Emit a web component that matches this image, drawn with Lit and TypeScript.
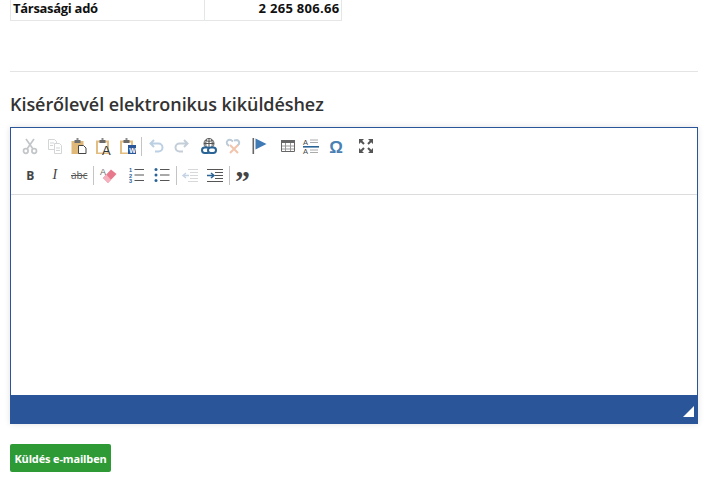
import { LitElement, html, css, svg } from "lit";
import { customElement } from "lit/decorators.js";

const clip = () => svg`<path d="M0 2.5h13v13.5H0z" fill="#e3be82"/><path d="M2 4.5h9v10H2z" fill="#fff"/><path d="M3.5 2h6v3h-6z" fill="#6b6b6b"/><path d="M5.5 0h2v2h-2z" fill="#8a8a8a"/>`;

const icons: Record<string, unknown> = {
  cut: svg`<g fill="none" stroke="#c3c6c9" stroke-width="1.7"><circle cx="3.8" cy="13" r="2.3"/><circle cx="12.2" cy="13" r="2.3"/><path d="M5 11 12 1M11 11 4 1"/></g>`,
  copy: svg`<g fill="#fff" stroke="#d3d5d7"><path d="M1.5 1.5h6l2 2v8h-8z"/><path d="M7.5 5.5h5l2 2v8h-7z"/><path d="M3 5h4M3 7.5h3M9 10h4M9 12.5h4" fill="none"/></g>`,
  paste: svg`<path d="M0.5 3h12v13H.5z" fill="#e0b878"/><path d="M3.5 2h6v3h-6z" fill="#6f6f6f"/><path d="M5.5 0h2v2h-2z" fill="#8a8a8a"/><path d="M7.5 7.5h5l2.5 2.5v5.5H7.5z" fill="#fff" stroke="#444"/>`,
  pastetext: svg`${clip()}<text x="6" y="16.5" font-family="Liberation Sans, sans-serif" font-size="13" fill="#333">A</text>`,
  pasteword: svg`${clip()}<path d="M8 7h8v9H8z" fill="#2a5699"/><text x="9.2" y="14.5" font-family="Liberation Sans, sans-serif" font-size="7" font-weight="700" fill="#fff">W</text>`,
  undo: svg`<path d="M5 2 1.5 5.5 5 9M2 5.5h7.5a4 4 0 0 1 0 8H6" fill="none" stroke="#bcd0e4" stroke-width="2"/>`,
  redo: svg`<path d="M11 2l3.5 3.5L11 9M14 5.5H6.5a4 4 0 0 0 0 8H10" fill="none" stroke="#c4ced8" stroke-width="2"/>`,
  link: svg`<g fill="none" stroke="#555" stroke-width="1"><circle cx="8" cy="5.5" r="5"/><path d="M8 .5v10M3 5.5h10M4.5 2.5c2 1 5 1 7 0M5.5 1.5c-1 2-1 6 0 8M10.5 1.5c1 2 1 6 0 8"/></g><g fill="#fff" stroke="#2a6496" stroke-width="2"><rect x="1" y="9.5" width="8" height="5.5" rx="2.7"/><rect x="7" y="9.5" width="8" height="5.5" rx="2.7"/></g>`,
  unlink: svg`<g fill="none" stroke="#bccbd8" stroke-width="2"><path d="M8 3.5 6 2a3 3 0 0 0-4 4l2 2"/><path d="M9 2.5l3-.5a3 3 0 0 1 2 4l-1.5 1.5"/></g><path d="M5 7l8 8M13 7l-8 8" stroke="#f2c4ac" stroke-width="2"/>`,
  anchor: svg`<path d="M2.5 0h1.6v16H2.5z" fill="#666"/><path d="M5.5 0.5l11 5.5-11 5.5z" fill="#3f7ab5"/>`,
  table: svg`<path d="M2.5 2.5h13v11h-13z" fill="#fff" stroke="#666"/><path d="M2 2h14v3H2z" fill="#666"/><path d="M3 8h12M3 11h12M6.5 5v8M11.5 5v8" stroke="#999" fill="none"/>`,
  blocks: svg`<text x="0" y="7" font-family="Liberation Sans, sans-serif" font-size="7.5" fill="#444">A</text><text x="0" y="16" font-family="Liberation Sans, sans-serif" font-size="7.5" fill="#444">A</text><path d="M7 2h8M7 4.5h8M7 12h8M7 14.5h8" stroke="#aaa" fill="none"/><path d="M0 8h16v1.6H0z" fill="#2a6496"/>`,
  omega: svg`<text x="8" y="14.5" text-anchor="middle" font-family="Liberation Sans, sans-serif" font-size="17" font-weight="700" fill="#4a80b2">Ω</text>`,
  max: svg`<g fill="#555"><path d="M1 1h5L1 6zM15 1v5l-5-5zM1 15v-5l5 5zM15 15h-5l5-5z"/></g><path d="M3 3l3 3M13 3l-3 3M3 13l3-3M13 13l-3-3" stroke="#555" stroke-width="2" fill="none"/>`,
  eraser: svg`<text x="0" y="7.5" font-family="Liberation Sans, sans-serif" font-size="9" fill="#666">A</text><path d="M3 11 11 2.5l5.5 4.5-8.5 9z" fill="#e8798c"/><path d="M3 11l5 5 3-3.2-4.7-5.3z" fill="#f4b0bc"/>`,
  ol: svg`<g font-family="Liberation Sans, sans-serif" font-size="5.6" font-weight="700" fill="#2a6496"><text x="0" y="5">1</text><text x="0" y="10.7">2</text><text x="0" y="16">3</text></g><path d="M5.5 2.5H15M5.5 8H15M5.5 13.5H15" stroke="#555" stroke-width="1.1" fill="none"/>`,
  ul: svg`<g fill="#2a6496"><circle cx="2" cy="2.5" r="1.5"/><circle cx="2" cy="8" r="1.5"/><circle cx="2" cy="13.5" r="1.5"/></g><path d="M6 2.5h9.5M6 8h9.5M6 13.5h9.5" stroke="#555" stroke-width="1.1" fill="none"/>`,
  outdent: svg`<path d="M6 2.5h10M8 5.5h8M8 8.5h8M8 11.5h8M6 14.5h10" stroke="#d6d8da" fill="none"/><path d="M7 8.5H1M4 6 1 8.5 4 11" stroke="#c4d4e4" stroke-width="1.4" fill="none"/>`,
  indent: svg`<path d="M0 2.5h16M8 5.5h8M8 8.5h8M8 11.5h8M0 14.5h16" stroke="#555" fill="none"/><path d="M0 8.5h6M4 6l3 2.5L4 11" stroke="#2a6496" stroke-width="1.5" fill="none"/>`,
  quote: svg`<text x="0" y="24" font-family="Liberation Serif, serif" font-size="30" font-weight="700" fill="#444">”</text>`,
};

@customElement("app-root")
export class AppRoot extends LitElement {
  static styles = css`
    :host { display: block; width: 722px; height: 489px; background: #fff; overflow: hidden;
      font-family: "Open Sans", sans-serif; color: #222; }
    .page { padding: 0 24px 0 10px; }
    .table { display: grid; grid-template-columns: 193px 138px; width: 332px; height: 21px; box-sizing: border-box;
      border: 1px solid #e4e6e8; border-top: none; font-size: 13px; font-weight: 700; line-height: 17px; color: #111; }
    .label { padding-left: 2px; letter-spacing: -0.3px; }
    .num { text-align: right; border-left: 1px solid #e4e6e8; padding: 0 2.5px 0 0; letter-spacing: 0.3px; }
    hr { border: none; border-top: 1px solid #e4e4e4; margin: 50px 0 0; }
    h2 { margin: 20px 0 10px; font-size: 18px; line-height: 25px; font-weight: 600; color: #333; letter-spacing: -0.06px; }
    .editor { height: 297px; box-sizing: border-box; border: 1px solid #2a5699; display: flex; flex-direction: column;
      box-shadow: 0 0 6px rgba(0,0,0,.12); }
    .toolbar { height: 67px; box-sizing: border-box; border-bottom: 1px solid #dcdcdc; padding: 6px 0 0 7px; }
    .row { display: flex; align-items: center; height: 24px; margin-bottom: 5px; }
    .b { flex: none; width: 24.5px; height: 24px; display: flex; align-items: center; justify-content: center; }
    .b svg { width: 16px; height: 16px; display: block; overflow: visible; }
    .sep { flex: none; width: 1px; height: 19px; background: #c4c4c4; margin-right: 3px; }
    .sep2 { flex: none; width: 1px; height: 19px; background: #c4c4c4; margin: 0 1.5px 0 1.5px; }
    .g1 { margin-left: 3px; } .g2 { margin-left: 4.5px; } .g3 { margin-left: 5.5px; } .g4 { margin-left: 5px; }
    .t { font-family: "Open Sans", sans-serif; font-weight: 700; font-size: 12px; color: #444; }
    .it { font-style: italic; font-family: "Liberation Serif", serif; font-size: 14px; color: #444; }
    .st { font-family: "Open Sans", sans-serif; font-size: 10px; text-decoration: line-through; color: #555; }
    .body { flex: 1; }
    .foot { height: 28px; box-sizing: border-box; background: #2a5699; display: flex; justify-content: flex-end; align-items: flex-end; padding: 0 3px 6px 0; }
    .foot svg { width: 11px; height: 11px; display: block; }
    button { display: block; margin: 20px 0 0; width: 101px; height: 28px; padding: 0; border: none; border-radius: 2px;
      background: #2e9a36; color: #fff; font-family: "Open Sans", sans-serif; font-size: 11px; font-weight: 700; letter-spacing: -0.15px; }
  `;

  private i(n: string) {
    return html`<div class="b"><svg viewBox="0 0 16 16" aria-hidden="true">${icons[n]}</svg></div>`;
  }

  render() {
    return html`<div class="page">
      <div class="table"><div class="label">Társasági adó</div><div class="num">2 265 806.66</div></div>
      <hr />
      <h2>Kisérőlevél elektronikus kiküldéshez</h2>
      <div class="editor">
        <div class="toolbar">
          <div class="row">
            ${["cut", "copy", "paste", "pastetext", "pasteword"].map((n) => this.i(n))}
            <div class="sep"></div>
            ${["undo", "redo"].map((n) => this.i(n))}
            <div class="g1"></div>
            ${["link", "unlink", "anchor"].map((n) => this.i(n))}
            <div class="g2"></div>
            ${["table", "blocks", "omega"].map((n) => this.i(n))}
            <div class="g3"></div>
            ${this.i("max")}
          </div>
          <div class="row">
            <div class="b t">B</div>
            <div class="b it">I</div>
            <div class="b st">abc</div>
            <div class="sep2"></div>
            ${this.i("eraser")}
            <div class="g4"></div>
            ${["ol", "ul"].map((n) => this.i(n))}
            <div class="sep2"></div>
            ${["outdent", "indent"].map((n) => this.i(n))}
            <div class="sep2"></div>
            ${this.i("quote")}
          </div>
        </div>
        <div class="body"></div>
        <div class="foot"><svg viewBox="0 0 11 11"><path d="M11 0v11H0z" fill="#fff"/></svg></div>
      </div>
      <button>Küldés e-mailben</button>
    </div>`;
  }
}
